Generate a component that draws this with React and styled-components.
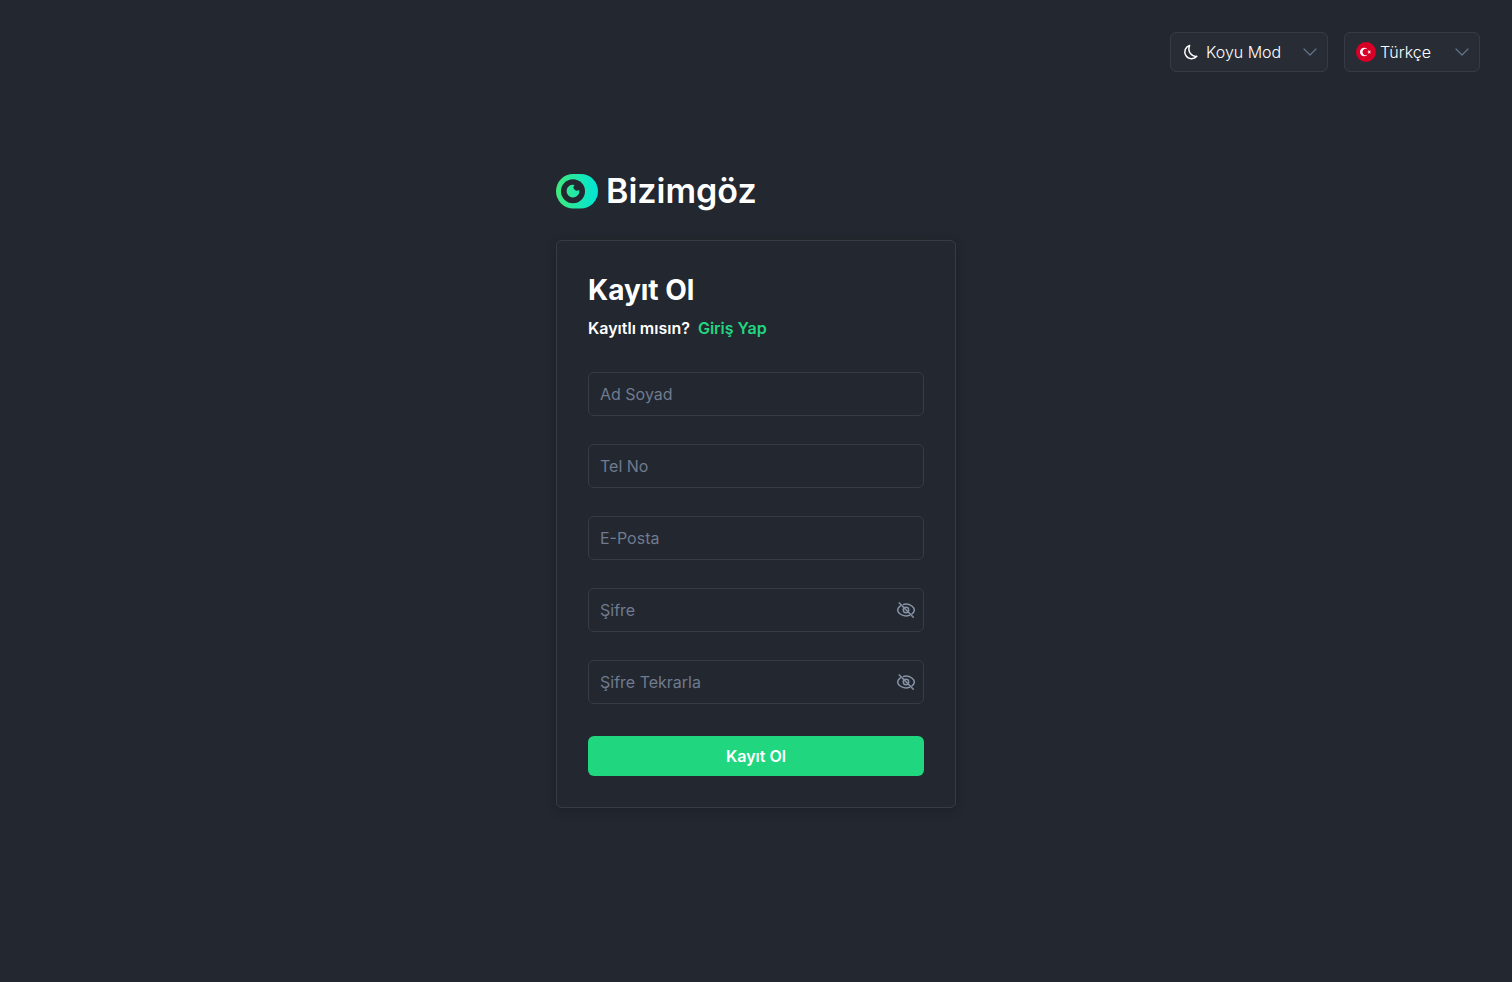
import React, { useState } from 'react';
import styled, { createGlobalStyle } from 'styled-components';

const colors = {
    page: '#23272f',
    field: '#282c35',
    border: '#363b45',
    text: '#ffffff',
    muted: '#6f7b8f',
    icon: '#64748b',
    primary: '#20d77f',
}

const GlobalStyle = createGlobalStyle`
    *, *::before, *::after {
        box-sizing: border-box;
    }
    body {
        margin: 0;
        background: ${colors.page};
        color: ${colors.text};
        font-family: Inter, sans-serif;
        font-size: 16px;
        line-height: 24px;
        -webkit-font-smoothing: antialiased;
    }
    button, input, select {
        font: inherit;
    }
`;

const Page = styled.div`
    display: grid;
    grid-template-rows: 1fr auto 1fr;
    min-height: 100vh;
`;

const TopBar = styled.header`
    display: flex;
    justify-content: flex-end;
    align-items: flex-start;
    gap: 16px;
    padding: 32px;
`;

const Picker = styled.label`
    display: flex;
    align-items: center;
    gap: ${props => props.$gap};
    width: ${props => props.$width};
    height: 40px;
    padding: 0 10px 0 11px;
    background: ${colors.field};
    border: 1px solid ${colors.border};
    border-radius: 6px;
`;

const PickerSelect = styled.select`
    flex: 1;
    min-width: 0;
    padding: 0;
    appearance: none;
    background: transparent;
    border: 0;
    outline: 0;
    color: ${colors.text};
    font-weight: 300;
    cursor: pointer;

    option {
        background: ${colors.field};
    }
`;

const Main = styled.main`
    display: flex;
    flex-direction: column;
    gap: 24px;
    width: 100%;
    max-width: 400px;
    margin: 0 auto;
`;

const Logo = styled.div`
    display: flex;
    align-items: flex-start;
    gap: 8px;
    height: 42px;
`;

const LogoName = styled.span`
    font-size: 34px;
    font-weight: 600;
    line-height: 34px;
`;

const Card = styled.section`
    padding: 31px;
    border: 1px solid ${colors.border};
    border-radius: 6px;
    box-shadow: 0 2px 12px rgba(0, 0, 0, 0.2);
`;

const Title = styled.h1`
    margin: 0 0 8px;
    font-size: 28px;
    font-weight: 700;
    line-height: 36px;
`;

const SubTitle = styled.p`
    display: flex;
    gap: 8px;
    margin: 0 0 32px;
    font-weight: 600;
`;

const LoginLink = styled.a`
    color: ${colors.primary};
    text-decoration: none;
`;

const Form = styled.form`
    display: flex;
    flex-direction: column;
    gap: 32px;
`;

const Fields = styled.div`
    display: flex;
    flex-direction: column;
    gap: 28px;
`;

const Field = styled.div`
    display: flex;
    align-items: center;
    height: 44px;
    border: 1px solid ${colors.border};
    border-radius: 6px;

    &:focus-within {
        border-color: ${colors.primary};
    }
`;

const Input = styled.input`
    flex: 1;
    min-width: 0;
    height: 100%;
    padding: 0 11px;
    background: transparent;
    border: 0;
    outline: 0;
    color: ${colors.text};

    &::placeholder {
        color: ${colors.muted};
        opacity: 1;
    }
`;

const EyeButton = styled.button`
    display: flex;
    padding: 0 8px;
    background: none;
    border: 0;
    color: #8492a6;
    cursor: pointer;
`;

const SubmitButton = styled.button`
    height: 40px;
    background: ${colors.primary};
    border: 0;
    border-radius: 6px;
    color: ${colors.text};
    font-weight: 600;
    cursor: pointer;
`;

const LogoMark = () => (
    <svg width="42" height="35" viewBox="0 0 42 35" aria-hidden="true">
        <defs>
            <linearGradient id="mark" x1="0" y1="0" x2="42" y2="0" gradientUnits="userSpaceOnUse">
                <stop offset="0" stopColor="#3fea7c" />
                <stop offset="1" stopColor="#00e5d8" />
            </linearGradient>
        </defs>
        <rect width="42" height="34.5" rx="17.25" fill="url(#mark)" />
        <circle cx="17" cy="17.2" r="12" fill={colors.page} />
        <path
            d="M18.6 10.9A6.4 6.4 0 1 0 23.2 15.7A2.8 2.8 0 0 1 18.6 10.9Z"
            fill="url(#mark)"
        />
    </svg>
)

const MoonIcon = () => (
    <svg width="16" height="16" viewBox="0 0 16 16" fill="none" stroke="currentColor" strokeWidth="1.5" strokeLinejoin="round" aria-hidden="true">
        <path d="M7.6 1.400A6.800 6.800 0 1 0 14.800 12.300C10.500 13.100 5 8.200 7.600 1.400Z" />
    </svg>
)

const TurkeyFlag = () => (
    <svg width="20" height="20" viewBox="0 0 20 20" aria-hidden="true">
        <circle cx="10" cy="10" r="10" fill="#d80027" />
        <path d="M11.7 12.600A3.200 3.200 0 1 1 11.700 7.400A4.300 4.300 0 1 0 11.700 12.600Z" fill="#fff" />
        <path d="M12.500 7.900l.9 1.200 1.500-.5-.9 1.400.9 1.400-1.500-.5-.9 1.200v-1.600l-1.400-.5 1.400-.5z" fill="#fff" />
    </svg>
)

const ChevronIcon = () => (
    <svg width="14" height="14" viewBox="0 0 14 14" fill="none" stroke={colors.icon} strokeWidth="1.2" strokeLinecap="round" strokeLinejoin="round" aria-hidden="true">
        <path d="M1 4l6 6 6-6" />
    </svg>
)

const EyeSlashIcon = () => (
    <svg width="18" height="18" viewBox="0 0 18 18" fill="none" stroke="currentColor" strokeWidth="1.5" strokeLinecap="round" aria-hidden="true">
        <path d="M6.500 3.500C7.300 3.200 8.100 3.100 9 3.100c4.500 0 8.300 3.100 8.300 5.900 0 1.400-.9 2.800-2.300 3.900" />
        <path d="M3.300 4.900C1.700 6 .7 7.500.7 9c0 2.800 3.800 5.900 8.300 5.900 1.200 0 2.400-.2 3.400-.6" />
        <circle cx="9" cy="9" r="2.700" />
        <path d="M2.300 1.900l14 14.300" />
    </svg>
)

const fields = [
    { name: 'fullName', label: 'Ad Soyad', type: 'text' },
    { name: 'phone', label: 'Tel No', type: 'tel' },
    { name: 'email', label: 'E-Posta', type: 'email' },
    { name: 'password', label: 'Şifre', type: 'password' },
    { name: 'passwordAgain', label: 'Şifre Tekrarla', type: 'password' },
]

const FormField = ({ name, label, type }) => {
    const [visible, setVisible] = useState(false);
    const secret = type === 'password';

    return (
        <Field>
            <Input
                id={name}
                name={name}
                type={secret && visible ? 'text' : type}
                placeholder={label}
                aria-label={label}
            />
            {secret && (
                <EyeButton type="button" aria-label="Şifreyi göster" onClick={() => setVisible(!visible)}>
                    <EyeSlashIcon />
                </EyeButton>
            )}
        </Field>
    )
}

const App = () => {
    return (
        <Page>
            <GlobalStyle />
            <TopBar>
                <Picker $width="158px" $gap="8px">
                    <MoonIcon />
                    <PickerSelect aria-label="Tema" defaultValue="dark">
                        <option value="dark">Koyu Mod</option>
                        <option value="light">Açık Mod</option>
                    </PickerSelect>
                    <ChevronIcon />
                </Picker>
                <Picker $width="136px" $gap="4px">
                    <TurkeyFlag />
                    <PickerSelect aria-label="Dil" defaultValue="tr">
                        <option value="tr">Türkçe</option>
                        <option value="en">English</option>
                    </PickerSelect>
                    <ChevronIcon />
                </Picker>
            </TopBar>
            <Main>
                <Logo>
                    <LogoMark />
                    <LogoName>Bizimgöz</LogoName>
                </Logo>
                <Card>
                    <Title>Kayıt Ol</Title>
                    <SubTitle>
                        Kayıtlı mısın?
                        <LoginLink href="#giris">Giriş Yap</LoginLink>
                    </SubTitle>
                    <Form onSubmit={e => e.preventDefault()}>
                        <Fields>
                            {fields.map(field => <FormField key={field.name} {...field} />)}
                        </Fields>
                        <SubmitButton type="submit">Kayıt Ol</SubmitButton>
                    </Form>
                </Card>
            </Main>
        </Page>
    )
}
export default App;
